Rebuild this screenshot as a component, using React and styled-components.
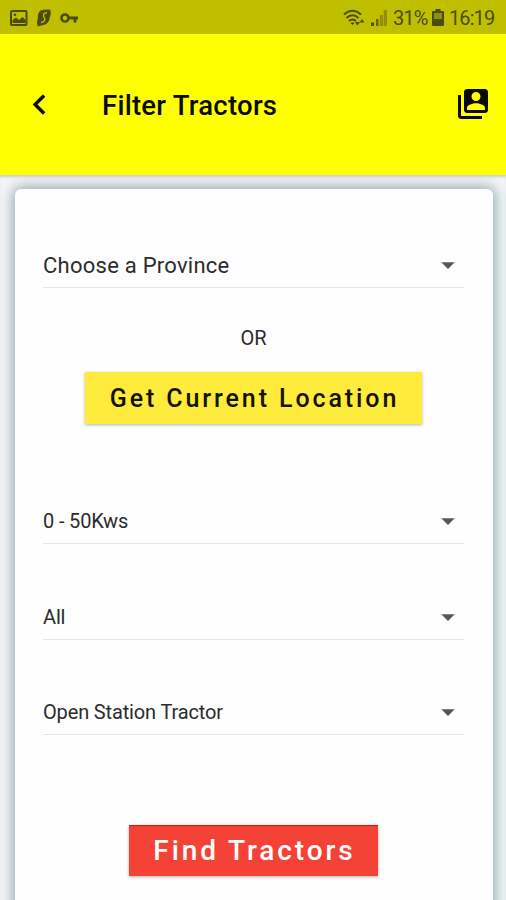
import React from 'react';
import styled, { createGlobalStyle } from 'styled-components';

const GlobalStyle = createGlobalStyle`
  * {
    box-sizing: border-box;
  }
  body {
    margin: 0;
    font-family: Roboto, "Liberation Sans", sans-serif;
    background: #f3f6f7;
  }
`;

const Screen = styled.div`
  display: flex;
  flex-direction: column;
  width: 506px;
  height: 900px;
  overflow: hidden;
`;

const StatusBar = styled.div`
  display: flex;
  align-items: center;
  justify-content: space-between;
  height: 34px;
  flex-shrink: 0;
  padding: 1px 11px 0 10px;
  background: #bfbf00;
  color: #4c4c0a;
`;

const StatusGroup = styled.div`
  display: flex;
  align-items: center;
  gap: ${(props) => props.$gap}px;

  svg {
    display: block;
  }
`;

const StatusText = styled.span`
  width: ${(props) => props.$width}px;
  font-size: 20px;
  line-height: 34px;
  letter-spacing: -0.9px;
  white-space: nowrap;
`;

const Header = styled.header`
  display: flex;
  align-items: center;
  height: 141px;
  flex-shrink: 0;
  padding: 0 15px 0 19px;
  background: #ffff00;
  color: #0a0a00;
`;

const Title = styled.h1`
  flex: 1;
  margin: 3px 0 0 42px;
  font-size: 27.5px;
  font-weight: 500;
  line-height: 32px;
  letter-spacing: 0.25px;
`;

const IconButton = styled.button`
  display: flex;
  padding: 0 0 ${(props) => props.$lift || 0}px;
  border: 0;
  background: none;
  color: inherit;
`;

const Body = styled.main`
  flex: 1;
  padding: 14px 13px 0 15px;
  background: #f3f6f7;
  box-shadow: inset 0 3px 3px -1px rgba(0, 0, 0, 0.16);
`;

const Card = styled.div`
  display: flex;
  flex-direction: column;
  align-items: center;
  height: 740px;
  padding: 52px 29px 0 28px;
  border-radius: 6px;
  background: #fefefe;
  box-shadow: 0 0 14px 2px #90a4ae;
`;

const Select = styled.div`
  display: flex;
  align-items: center;
  justify-content: space-between;
  align-self: stretch;
  height: 47px;
  padding-top: ${(props) => props.$drop || 0}px;
  margin-bottom: ${(props) => props.$gap || 0}px;
  border-bottom: 1px solid #e5e5e5;
  color: #2b2b2b;
  font-size: ${(props) => props.$size || 20}px;
  letter-spacing: ${(props) => props.$spacing || 0}px;

  svg {
    display: block;
    color: #555;
  }
`;

const Divider = styled.div`
  margin: 38px 0 22px;
  color: #2b2b2b;
  font-size: 20px;
  line-height: 24px;
`;

const Button = styled.button`
  width: ${(props) => props.$width}px;
  height: ${(props) => props.$height}px;
  margin: ${(props) => props.$margin};
  padding: 0 0 0 2px;
  border: 0;
  background: ${(props) => props.$background};
  box-shadow: 0 1px 3px rgba(0, 0, 0, 0.3), inset 0 2px 1px -1px ${(props) => props.$edge || 'transparent'};
  color: ${(props) => props.$color};
  font-family: inherit;
  font-size: ${(props) => props.$size}px;
  font-weight: 500;
  letter-spacing: 2.9px;
  white-space: nowrap;
`;

function Icon({ size, path }) {
  return (
    <svg width={size} height={size} viewBox="0 0 24 24" fill="currentColor">
      <path d={path} />
    </svg>
  );
}

function PictureIcon() {
  return (
    <svg width="18" height="16" viewBox="0 0 18 16">
      <rect x="1" y="1" width="15.5" height="14" rx="1" fill="none" stroke="currentColor" strokeWidth="2" />
      <path d="M2.500 13V10L6 7.500l3 2.500 3.500-3L15.500 10v3z" fill="currentColor" />
      <circle cx="5" cy="4.800" r="1.300" fill="currentColor" />
    </svg>
  );
}

function NoteIcon() {
  return (
    <svg width="16" height="18" viewBox="0 0 16 18">
      <path d="M4.500 1.500Q9 0 14.500.8q1 4.700-1 8.700-.3 4-4.500 6L1.500 17.500q-1.200-4.500.3-8Q1.500 4 4.500 1.500z" fill="currentColor" />
      <path d="M11 4Q8 3.500 7.500 6.200q-.2 1.800 1 2.500 1 .8 0 2.700Q7.500 13.600 5 13.500" fill="none" stroke="#bfbf00" strokeWidth="1.300" />
    </svg>
  );
}

function KeyIcon() {
  return (
    <svg width="19" height="12" viewBox="0 0 19 12">
      <circle cx="5" cy="6" r="3.500" fill="none" stroke="currentColor" strokeWidth="2.600" />
      <path d="M9 6h9M15 6v4.500" fill="none" stroke="currentColor" strokeWidth="2.800" />
    </svg>
  );
}

function WifiIcon() {
  return (
    <svg width="23" height="18" viewBox="0 0 23 18">
      <g fill="none" stroke="currentColor" strokeWidth="2">
        <path d="M1 5.500Q9.500-2 18 5.500" />
        <path d="M3.500 9Q9.500 3.500 15.500 9" />
        <path d="M6 12Q9.500 9 13 12" />
      </g>
      <path d="M7.500 14Q9.500 12.500 11.500 14L9.500 16zM12 13h5l-2.500 3.500zM16.500 13.500h5L19 10z" fill="currentColor" />
    </svg>
  );
}

function SignalIcon() {
  return (
    <svg width="17" height="17" viewBox="0 0 17 17" fill="currentColor">
      <path d="M0 13.500h3V17H0z" />
      <path d="M5 10h2.500v7H5z" opacity="0.75" />
      <path d="M8.800 6H12v11H8.800zM12.700 1H16v16h-3.300z" opacity="0.4" />
    </svg>
  );
}

function BatteryIcon() {
  return (
    <svg width="12" height="17" viewBox="0 0 12 17">
      <path d="M3.500 0h5v2H11q1 0 1 1v13q0 1-1 1H1q-1 0-1-1V3q0-1 1-1h2.500z" fill="currentColor" />
      <path d="M2 4h8v6H2z" fill="#8f8f08" />
    </svg>
  );
}

const ARROW = 'M7 10l5 5 5-5z';
const BACK = 'M15.41 7.41L14 6l-6 6 6 6 1.41-1.41L10.83 12z';
const ACCOUNT = 'M4 6H2v14c0 1.100.9 2 2 2h14v-2H4V6zm16-4H8c-1.100 0-2 .9-2 2v12c0 1.100.9 2 2 2h12c1.100 0 2-.9 2-2V4c0-1.100-.9-2-2-2zm-6 2c1.660 0 3 1.340 3 3s-1.340 3-3 3-3-1.340-3-3 1.340-3 3-3zm6 12H8v-1.500c0-1.990 4-3 6-3s6 1.010 6 3V16z';

function Dropdown({ label, size, spacing, gap, drop }) {
  return (
    <Select $size={size} $spacing={spacing} $gap={gap} $drop={drop}>
      <span>{label}</span>
      <Icon size={32} path={ARROW} />
    </Select>
  );
}

function App() {
  return (
    <>
      <GlobalStyle />
      <Screen>
        <StatusBar>
          <StatusGroup $gap={8}>
            <PictureIcon />
            <NoteIcon />
            <KeyIcon />
          </StatusGroup>
          <StatusGroup $gap={5}>
            <WifiIcon />
            <SignalIcon />
            <StatusText $width={34}>31%</StatusText>
            <BatteryIcon />
            <StatusText $width={46}>16:19</StatusText>
          </StatusGroup>
        </StatusBar>
        <Header>
          <IconButton aria-label="Back">
            <Icon size={41} path={BACK} />
          </IconButton>
          <Title>Filter Tractors</Title>
          <IconButton aria-label="Account" $lift={2}>
            <Icon size={36} path={ACCOUNT} />
          </IconButton>
        </Header>
        <Body>
          <Card>
            <Dropdown label="Choose a Province" size={22} spacing={0.25} drop={2} />
            <Divider>OR</Divider>
            <Button $width={337} $height={52} $size={25} $margin="0 0 73px" $background="#ffeb3b" $color="#141200">
              Get Current Location
            </Button>
            <Dropdown label="0 - 50Kws" spacing={-0.15} gap={49} drop={2} />
            <Dropdown label="All" spacing={-0.15} gap={48} drop={1} />
            <Dropdown label="Open Station Tractor" spacing={-0.15} drop={2} />
            <Button
              $width={249}
              $height={51}
              $size={28}
              $margin="90px 0 0"
              $background="#f44336"
              $edge="#d50f0f"
              $color="#fff"
            >
              Find Tractors
            </Button>
          </Card>
        </Body>
      </Screen>
    </>
  );
}

export default App;
